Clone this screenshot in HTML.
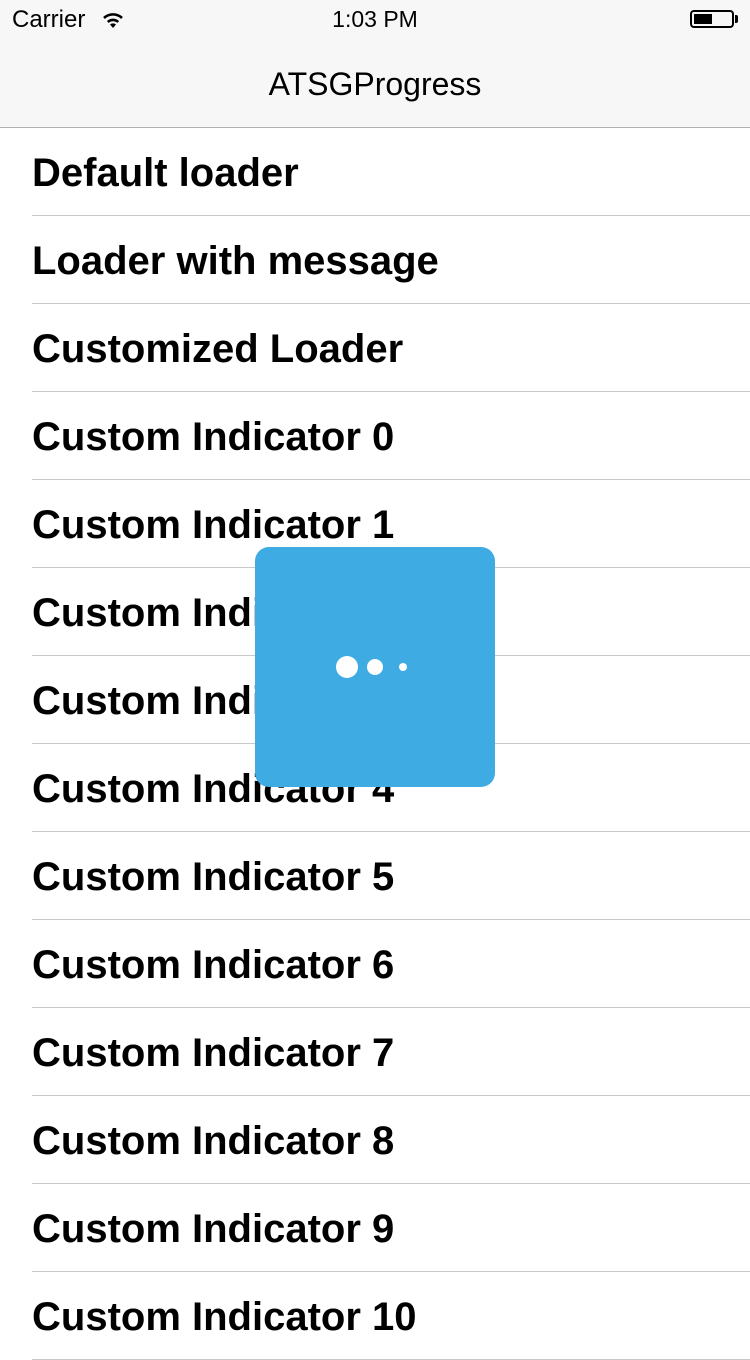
<!DOCTYPE html>
<html><head><style>
body{margin:0;width:750px;height:1334px;overflow:hidden;background:#fff;font-family:"Liberation Sans",sans-serif;position:relative}
.nav{position:absolute;left:0;top:0;width:750px;height:127px;background:#f7f7f7;border-bottom:1px solid #b2b2b2}
.status{position:absolute;top:6px;font-size:24px;color:#000}
.title{position:absolute;top:66px;width:750px;text-align:center;font-size:32px;color:#000}
.row{position:absolute;left:0;width:750px;height:88px}
.row span{position:absolute;left:32px;top:23px;font-size:40px;font-weight:bold;color:#000}
.row i{position:absolute;left:32px;right:0;bottom:0;height:1px;background:#c8c7cc}
.hud{position:absolute;left:255px;top:547px;width:240px;height:240px;background:#3eace2;border-radius:14px}
.d{position:absolute;background:#fff;border-radius:50%}
</style></head><body>
<div class="nav">
<div class="status" style="left:12px">Carrier</div>
<svg style="position:absolute;left:100px;top:10px" width="26" height="20" viewBox="0 0 26 20">
<path d="M13 18 L10 14.5 A4.5 4.5 0 0 1 16 14.5 Z" fill="#000"/>
<path d="M7.8 12 A7.5 7.5 0 0 1 18.2 12" stroke="#000" stroke-width="2.6" fill="none"/>
<path d="M4 8 A13 13 0 0 1 22 8" stroke="#000" stroke-width="2.6" fill="none"/>
</svg>
<div class="status" style="left:0;width:750px;text-align:center;font-size:23px">1:03 PM</div>
<div style="position:absolute;left:690px;top:10px;width:44px;height:18px;border:2px solid #000;border-radius:4px;box-sizing:border-box"><div style="position:absolute;left:2px;top:2px;width:18px;height:10px;background:#000"></div></div>
<div style="position:absolute;left:735px;top:15px;width:3px;height:8px;background:#000;border-radius:0 2px 2px 0"></div>
<div class="title">ATSGProgress</div>
</div>
<div class="row" style="top:128px"><span>Default loader</span><i></i></div>
<div class="row" style="top:216px"><span>Loader with message</span><i></i></div>
<div class="row" style="top:304px"><span>Customized Loader</span><i></i></div>
<div class="row" style="top:392px"><span>Custom Indicator 0</span><i></i></div>
<div class="row" style="top:480px"><span>Custom Indicator 1</span><i></i></div>
<div class="row" style="top:568px"><span>Custom Indicator 2</span><i></i></div>
<div class="row" style="top:656px"><span>Custom Indicator 3</span><i></i></div>
<div class="row" style="top:744px"><span>Custom Indicator 4</span><i></i></div>
<div class="row" style="top:832px"><span>Custom Indicator 5</span><i></i></div>
<div class="row" style="top:920px"><span>Custom Indicator 6</span><i></i></div>
<div class="row" style="top:1008px"><span>Custom Indicator 7</span><i></i></div>
<div class="row" style="top:1096px"><span>Custom Indicator 8</span><i></i></div>
<div class="row" style="top:1184px"><span>Custom Indicator 9</span><i></i></div>
<div class="row" style="top:1272px"><span>Custom Indicator 10</span><i></i></div>
<div class="hud">
<div class="d" style="left:81px;top:109px;width:22px;height:22px"></div>
<div class="d" style="left:112px;top:112px;width:16px;height:16px"></div>
<div class="d" style="left:144px;top:116px;width:8px;height:8px"></div>
</div>
</body></html>
